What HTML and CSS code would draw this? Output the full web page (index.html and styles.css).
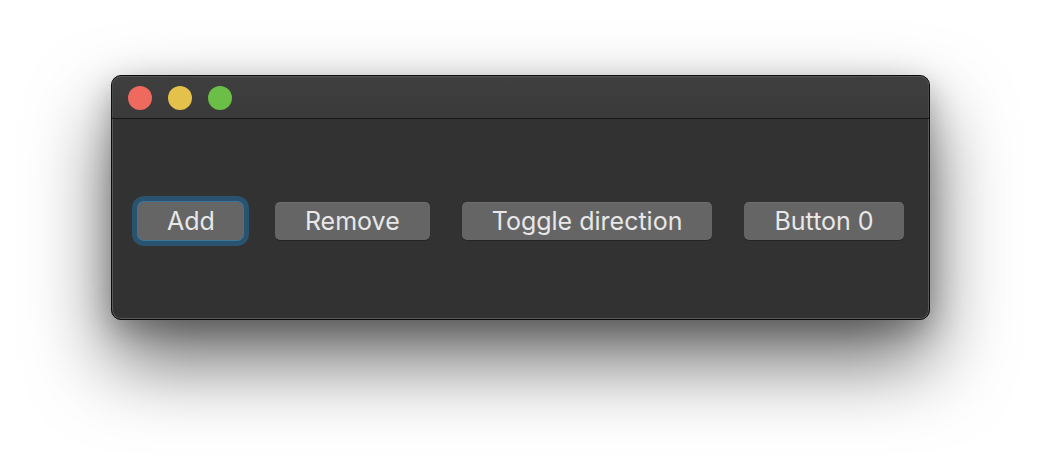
FILE: index.html
```html
<!DOCTYPE html>
<html>
<head>
<meta charset="utf-8">
<link rel="stylesheet" href="styles.css">
</head>
<body>
<div class="window">
  <div class="titlebar">
    <span class="light red"></span>
    <span class="light yellow"></span>
    <span class="light green"></span>
  </div>
  <div class="content">
    <button class="btn focused">Add</button>
    <button class="btn">Remove</button>
    <button class="btn">Toggle direction</button>
    <button class="btn">Button 0</button>
  </div>
</div>
</body>
</html>
```
FILE: styles.css
```css
html, body {
  margin: 0;
  padding: 0;
  background: #ffffff;
  width: 1042px;
  height: 468px;
  overflow: hidden;
}
body {
  display: flex;
  align-items: flex-start;
  padding: 75px 0 0 111px;
  box-sizing: border-box;
  font-family: "Inter", "Liberation Sans", sans-serif;
}
.window {
  width: 819px;
  height: 245px;
  box-sizing: border-box;
  border: 1px solid #0c0c0c;
  border-radius: 10px;
  background: #323232;
  box-shadow: inset 0 0 0 1px #5a5a5a, 0 40px 80px rgba(0,0,0,0.6), 0 10px 30px rgba(0,0,0,0.25);
  display: flex;
  flex-direction: column;
  overflow: hidden;
}
.titlebar {
  height: 43px;
  flex: none;
  box-sizing: border-box;
  background: linear-gradient(#3f3f3f, #3a3a3a);
  border-bottom: 1px solid #161616;
  display: flex;
  align-items: center;
  gap: 16px;
  padding: 0 0 0 16px;
  border-radius: 9px 9px 0 0;
  box-shadow: inset 0 1px 0 #555, inset 1px 0 0 #4a4a4a, inset -1px 0 0 #4a4a4a;
}
.light {
  width: 24px;
  height: 24px;
  border-radius: 50%;
  display: block;
  margin-top: 1px;
}
.red { background: #ee6a5f; }
.yellow { background: #e3c14b; }
.green { background: #6bbe46; }
.content {
  flex: 1;
  display: flex;
  align-items: center;
  gap: 32px;
  padding: 4px 0 0 26px;
}
.btn {
  height: 38px;
  box-sizing: border-box;
  padding: 0 30px;
  border: none;
  border-radius: 5px;
  background: #656565;
  color: #e8e8e8;
  font-family: "Inter", "Liberation Sans", sans-serif;
  font-size: 25px;
  line-height: 38px;
  box-shadow: 0 1px 0 rgba(0,0,0,0.25), inset 0 1px 0 rgba(255,255,255,0.06);
}
.focused {
  padding: 0 28px 0 29px;
  box-shadow: 0 0 0 1px #3f7599, 0 0 0 6px #29536f;
  border-radius: 6px;
}
```
